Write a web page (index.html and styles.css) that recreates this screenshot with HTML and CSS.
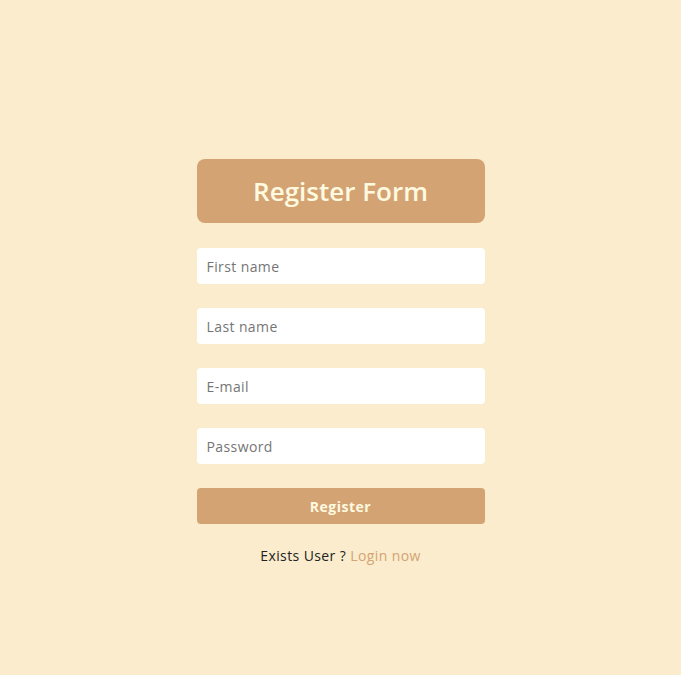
FILE: index.html
```html
<!DOCTYPE html>
<html>
<head>
<meta charset="utf-8">
<link rel="stylesheet" href="styles.css">
</head>
<body>
<main class="page">
  <form class="form">
    <h1 class="title">Register Form</h1>
    <input class="field" type="text" placeholder="First name">
    <input class="field" type="text" placeholder="Last name">
    <input class="field" type="email" placeholder="E-mail">
    <input class="field" type="password" placeholder="Password">
    <button class="btn" type="button">Register</button>
    <p class="note">Exists User ? <a class="link" href="#">Login now</a></p>
  </form>
</main>
</body>
</html>
```
FILE: styles.css
```css
* { box-sizing: border-box; }
html, body { margin: 0; padding: 0; }
body {
  background: #faeccd;
  font-family: "Open Sans", "Liberation Sans", sans-serif;
  height: 675px;
}
.page {
  display: flex;
  justify-content: center;
  padding-top: 159px;
}
.form {
  width: 288px;
  display: flex;
  flex-direction: column;
  gap: 24px;
}
.title {
  margin: 0 0 1px;
  height: 64px;
  background: #d4a373;
  border-radius: 8px;
  color: #fefae0;
  font-size: 26px;
  font-weight: 600;
  display: flex;
  align-items: center;
  justify-content: center;
}
.field {
  height: 36px;
  border: none;
  border-radius: 4px;
  background: #fff;
  padding: 0 10px;
  font-family: inherit;
  font-size: 14px;
  letter-spacing: 0.4px;
  color: #333;
  outline: none;
}
.field::placeholder { color: #757575; }
.btn {
  height: 36px;
  border: none;
  border-radius: 4px;
  background: #d4a373;
  color: #fefae0;
  font-family: inherit;
  font-weight: 700;
  font-size: 14px;
  letter-spacing: 0.5px;
}
.note {
  margin: -2px 0 0;
  text-align: center;
  font-size: 14px;
  letter-spacing: 0.4px;
  color: #222;
}
.link { color: #d4a373; text-decoration: none; }
```
